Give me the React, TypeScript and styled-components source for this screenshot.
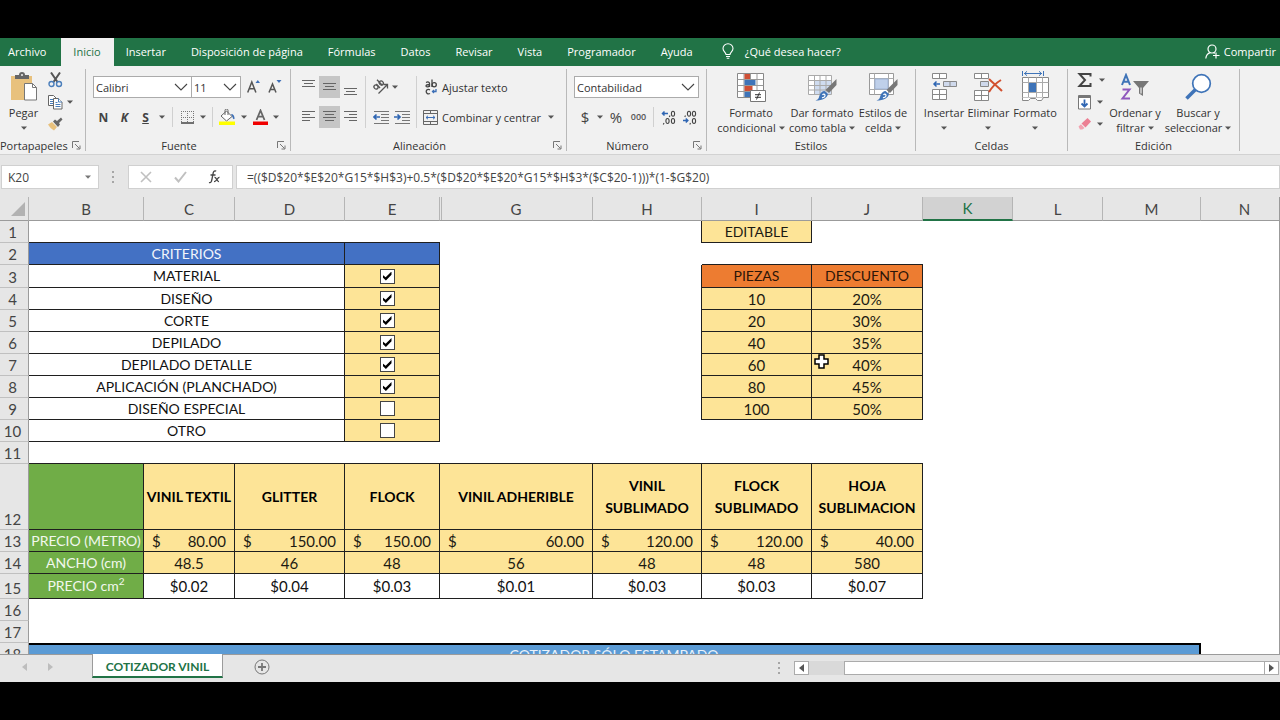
import React from "react";
import styled, { createGlobalStyle, css } from "styled-components";

const ui = `"Open Sans", "Noto Sans", sans-serif`;
const sheetFont = `Lato, "Open Sans", sans-serif`;

const GlobalStyle = createGlobalStyle`
  *, *::before, *::after { box-sizing: border-box; }
  body { margin: 0; background: #000; }
  button, input, select { font: inherit; color: inherit; margin: 0; }
`;

/* ---------- shell ---------- */

const Screen = styled.div`
  display: flex;
  flex-direction: column;
  height: 100vh;
  padding: 38px 0;
  background: #000;
  overflow: hidden;
  font: 11px/15px ${ui};
  color: #333;
`;

const PlainButton = styled.button.attrs({ type: "button" })`
  display: flex;
  align-items: center;
  justify-content: center;
  padding: 0;
  border: 0;
  background: none;
  white-space: nowrap;
`;

/* ---------- menu tabs ---------- */

const MenuBar = styled.nav`
  display: flex;
  flex: none;
  height: 28px;
  background: #217346;
  color: #fff;
`;

const MenuTab = styled(PlainButton)<{ $active?: boolean }>`
  padding: 0 13px 2px 12px;
  background: ${(p) => (p.$active ? "#f1f1f1" : "none")};
  color: ${(p) => (p.$active ? "#217346" : "inherit")};
`;

const FileTab = styled(MenuTab)`
  padding: 0 15px 2px 8px;
`;

const TellMe = styled(MenuTab)`
  gap: 11px;
  padding-left: 16px;
`;

const Share = styled(MenuTab)`
  gap: 4px;
  margin-left: auto;
  padding-left: 0;
  padding-right: 4px;
`;

/* ---------- ribbon ---------- */

const Ribbon = styled.div`
  display: flex;
  flex: none;
  height: 89px;
  padding: 3px 0;
  background: #f1f1f1;
  border-bottom: 1px solid #d2d2d2;
`;

const Group = styled.section<{ $w: number }>`
  display: flex;
  flex-direction: column;
  flex: none;
  width: ${(p) => p.$w}px;
  border-right: 1px solid #b9b9b9;
`;

const GroupBody = styled.div<{ $pad?: number }>`
  display: flex;
  flex: 1;
  padding-left: ${(p) => p.$pad ?? 0}px;
`;

const GroupFoot = styled.div`
  display: flex;
  height: 11px;
  align-items: center;
`;

const GroupName = styled.span`
  flex: 1;
  text-align: center;
`;

const Launcher = styled(PlainButton)`
  width: 18px;
  height: 11px;
`;

const Stack = styled.div<{ $indent?: number }>`
  display: flex;
  flex-direction: column;
  gap: 8px;
  padding: 7px 0 0 ${(p) => p.$indent ?? 0}px;
`;

const Line = styled.div<{ $gap?: number }>`
  display: flex;
  align-items: center;
  height: 22px;
  gap: ${(p) => p.$gap ?? 0}px;
`;

const Tool = styled(PlainButton)<{ $on?: boolean; $w?: number }>`
  width: ${(p) => p.$w ?? 21}px;
  height: 22px;
  background: ${(p) => (p.$on ? "#c6c6c6" : "none")};
`;

const TextTool = styled(PlainButton)`
  height: 22px;
  gap: 4px;
`;

const Letter = styled(Tool)<{ $italic?: boolean; $underline?: boolean }>`
  font-size: 12px;
  font-weight: 700;
  font-style: ${(p) => (p.$italic ? "italic" : "normal")};
  text-decoration: ${(p) => (p.$underline ? "underline" : "none")};
  color: #444;
`;

const Divider = styled.i<{ $tall?: boolean }>`
  flex: none;
  width: 1px;
  height: ${(p) => (p.$tall ? 52 : 20)}px;
  margin: ${(p) => (p.$tall ? "7px 4px 0" : "0 4px")};
  background: #d0d0d0;
`;

const BigTool = styled(PlainButton)<{ $w: number }>`
  flex-direction: column;
  justify-content: flex-start;
  width: ${(p) => p.$w}px;
  padding-top: 2px;
  gap: 3px;
`;

const BigIcon = styled.span`
  display: flex;
  align-items: center;
  justify-content: center;
  height: 31px;
`;

const BigLabel = styled.span`
  display: flex;
  flex-direction: column;
  align-items: center;
`;

const WithCaret = styled.span`
  display: flex;
  align-items: center;
  gap: 3px;
  min-height: 15px;
`;

const SmallColumn = styled.div`
  display: flex;
  flex-direction: column;
`;

const SelectBox = styled.label<{ $w: number }>`
  display: grid;
  flex: none;
  width: ${(p) => p.$w}px;
  height: 22px;
  align-items: center;
  border: 1px solid #ababab;
  background: #fff;

  & + & { margin-left: -1px; }
  > * { grid-area: 1 / 1; }
  > svg { justify-self: end; margin-right: 3px; pointer-events: none; }
  > select {
    appearance: none;
    width: 100%;
    height: 20px;
    padding: 0 2px;
    border: 0;
    background: none;
    color: #333;
  }
`;

/* ---------- formula bar ---------- */

const FormulaBar = styled.div`
  display: flex;
  flex: none;
  align-items: center;
  height: 42px;
  padding: 10px 0 8px 1px;
  background: #e6e6e6;
  font-size: 12px;
`;

const Box = styled.div<{ $w?: number }>`
  display: flex;
  align-items: center;
  flex: ${(p) => (p.$w ? "none" : "1")};
  width: ${(p) => (p.$w ? `${p.$w}px` : "auto")};
  height: 24px;
  border: 1px solid #d0d0d0;
  background: #fff;
`;

const FormulaBox = styled(Box)`
  margin-left: 3px;
  padding-left: 10px;
`;

const Field = styled.input`
  flex: 1;
  min-width: 0;
  height: 20px;
  padding: 0;
  border: 0;
  background: none;
  color: #444;
`;

const NameField = styled(Field)`
  padding-left: 6px;
`;

const BoxButton = styled(PlainButton)`
  flex: 1;
`;

const NameArrow = styled(PlainButton)`
  width: 20px;
`;

const Grip = styled.div<{ $left: number; $right: number }>`
  margin: 0 ${(p) => p.$right}px 0 ${(p) => p.$left}px;
  display: grid;
  gap: 3px;
  > i { width: 2px; height: 2px; background: #a6a6a6; }
`;

/* ---------- sheet ---------- */

const SheetArea = styled.main`
  flex: 1;
  min-height: 0;
  overflow: hidden;
  background: #fff;
  border-right: 1px solid #9b9b9b;
`;

const Grid = styled.table`
  width: 1289px;
  table-layout: fixed;
  border-collapse: separate;
  border-spacing: 0;
  font: 15px/20px ${sheetFont};
  color: #111;
`;

const Col = styled.col<{ $w: number }>`
  width: ${(p) => p.$w}px;
`;

const ColHead = styled.th<{ $active?: boolean; $double?: boolean }>`
  height: 24px;
  padding: 0;
  font-weight: 400;
  color: ${(p) => (p.$active ? "#217346" : "#444")};
  background: ${(p) => (p.$active ? "#d2d2d2" : "#e6e6e6")};
  border-right: 1px solid #b5b5b5;
  border-bottom: ${(p) => (p.$active ? "2px solid #217346" : "1px solid #9b9b9b")};
  ${(p) =>
    p.$double &&
    css`
      background: linear-gradient(#b5b5b5, #b5b5b5) 1px 0 / 1px 100% no-repeat #e6e6e6;
    `}
`;

const Corner = styled(ColHead)`
  > svg { display: block; margin-left: 11px; }
`;

const RowHead = styled.th<{ $h: number }>`
  height: ${(p) => p.$h}px;
  padding: 0 3px 0 0;
  font-weight: 400;
  vertical-align: bottom;
  color: #444;
  background: #e6e6e6;
  border-right: 1px solid #9b9b9b;
  border-bottom: 1px solid #c0c0c0;
`;

const fills = {
  none: ["transparent", "#111"],
  yellow: ["#fde497", "#1c1a12"],
  blue: ["#4371c4", "#f3f6fb"],
  orange: ["#ed7c31", "#2b1508"],
  green: ["#70ad47", "#f2f8ee"],
} as const;

type Fill = keyof typeof fills;

const Cell = styled.td<{ $fill?: Fill; $b?: boolean; $r?: boolean }>`
  padding: 0;
  text-align: center;
  white-space: nowrap;
  background: ${(p) => fills[p.$fill ?? "none"][0]};
  color: ${(p) => fills[p.$fill ?? "none"][1]};
  border: 0 solid #1f1f1f;
  border-bottom-width: ${(p) => (p.$b ? 1 : 0)}px;
  border-right-width: ${(p) => (p.$r ? 1 : 0)}px;
`;

const LabelCell = styled(Cell)`
  font-size: 14px;
  > sup { font-size: 10px; line-height: 10px; }
`;

const MaterialCell = styled(LabelCell)`
  font-weight: 700;
  line-height: 22px;
  color: #000;
`;

const BannerCell = styled.td`
  padding: 0;
  font-size: 14px;
  text-align: center;
  color: #eaf2fa;
  background: #5b9bd5;
  border-top: 2px solid #000;
  border-right: 2px solid #000;
`;

const Money = styled.span`
  display: flex;
  justify-content: space-between;
  padding: 0 8px;
`;

const Check = styled.input.attrs({ type: "checkbox" })`
  appearance: none;
  display: block;
  width: 15px;
  height: 15px;
  margin: 0 auto;
  border: 1px solid #444;
  background: #fff;

  &:checked::after {
    content: "";
    display: block;
    width: 9px;
    height: 9px;
    margin: 2px;
    background: #000;
    clip-path: polygon(0 35%, 35% 65%, 100% 0, 100% 35%, 38% 100%, 0 65%);
  }
`;

const CheckCell = styled(Cell)`
  padding-right: 10px;
`;

const PointerCell = styled(Cell)`
  position: relative;
  > svg { position: absolute; left: 2px; top: 0; }
`;

/* ---------- bottom bar ---------- */

const BottomBar = styled.footer`
  display: flex;
  flex: none;
  align-items: flex-start;
  height: 28px;
  background: #e6e6e6;
  border-top: 1px solid #9b9b9b;
`;

const TabArrows = styled.div`
  display: flex;
  align-items: center;
  width: 92px;
  height: 24px;
  gap: 21px;
  padding-left: 22px;
`;

const SheetTab = styled(PlainButton)`
  height: 24px;
  width: 131px;
  margin-top: -1px;
  padding-top: 3px;
  background: #fff;
  border: solid #9b9b9b;
  border-width: 0 1px;
  border-bottom: 2px solid #217346;
  font: 700 12px/20px ${sheetFont};
  color: #217346;
`;

const AddSheet = styled(PlainButton)`
  height: 24px;
  margin-left: 31px;
`;

const ScrollArea = styled.div`
  display: flex;
  align-items: center;
  width: 502px;
  height: 26px;
  margin-left: auto;
  padding-right: 1px;
`;

const ScrollTrack = styled.div`
  display: flex;
  flex: 1;
  height: 14px;
  background: #d9d9d9;
`;

const ScrollButton = styled(PlainButton)`
  width: 15px;
  height: 14px;
  background: #fff;
  border: 1px solid #ababab;
`;

const ScrollThumb = styled.div`
  flex: 1;
  margin: 0 -1px 0 35px;
  background: #fff;
  border: 1px solid #ababab;
`;

/* ---------- drawings ---------- */

const Caret = ({ color = "#555" }: { color?: string }) => (
  <svg width="6" height="4" viewBox="0 0 6 4" aria-hidden="true">
    <path d="M0 0.5h6L3 3.8z" fill={color} />
  </svg>
);

const Chevron = () => (
  <svg width="14" height="8" viewBox="0 0 14 8" fill="none" stroke="#444" strokeWidth="1.1" aria-hidden="true">
    <path d="M1 1l6 6 6-6" />
  </svg>
);

const Lines = ({ rows, y = 4, step = 3 }: { rows: [number, number][]; y?: number; step?: number }) => (
  <svg width="15" height="20" viewBox="0 0 15 20" stroke="#666" aria-hidden="true">
    {rows.map(([a, b], i) => (
      <path key={i} d={`M${a} ${y + i * step + 0.5}H${b}`} />
    ))}
  </svg>
);

const LauncherIcon = () => (
  <svg width="9" height="9" viewBox="0 0 9 9" fill="none" stroke="#777" aria-hidden="true">
    <path d="M.5 7V.5H7M3 3l4.500 4.500M8 4.500V8H4.500" />
  </svg>
);

const Bulb = () => (
  <svg width="12" height="16" viewBox="0 0 12 16" fill="none" stroke="#fff" strokeWidth="1.1" aria-hidden="true">
    <path d="M4 11.500C4 9.500 1 8.500 1 5.500a5 4.800 0 0 1 10 0c0 3-3 4-3 6zM4 13.500h4M4.700 15.300h2.600" />
  </svg>
);

const ShareIcon = () => (
  <svg width="15" height="15" viewBox="0 0 15 15" fill="none" stroke="#fff" strokeWidth="1.2" aria-hidden="true">
    <circle cx="7" cy="5" r="4" />
    <path d="M.8 14.500C1.200 11 3 9.300 5.300 8.700M8.500 8.600l1.500.7M11 8.500v6M8 11.500h6.500" />
  </svg>
);

const PasteIcon = () => (
  <svg width="28" height="29" viewBox="0 0 28 29" aria-hidden="true">
    <path d="M1 4h21v24H1z" fill="#e8c17d" />
    <path d="M5 3h4a3 3 0 0 1 6 0h4v4H5z" fill="#666" />
    <circle cx="12" cy="3" r="1" fill="#f1f1f1" />
    <path d="M14.500 11.500h8l4 4v12.500h-12z" fill="#fff" stroke="#777" />
    <path d="M22.500 11.500v4h4" fill="none" stroke="#777" />
  </svg>
);

const CutIcon = () => (
  <svg width="15" height="16" viewBox="0 0 15 16" fill="none" aria-hidden="true">
    <path d="M3 .5l6.500 9.500M12 .5L5.500 10" stroke="#555" strokeWidth="2" />
    <circle cx="3.500" cy="12" r="2.500" stroke="#4a7ebb" strokeWidth="1.400" />
    <circle cx="11" cy="12" r="2.500" stroke="#4a7ebb" strokeWidth="1.400" />
  </svg>
);

const CopyIcon = () => (
  <svg width="15" height="15" viewBox="0 0 15 15" fill="#fff" stroke="#666" aria-hidden="true">
    <path d="M.5.500h5l2.500 2.500v7.500H.5z" />
    <path d="M2 4.500h3M2 6.500h3M2 8.500h3" stroke="#4a7ebb" />
    <path d="M5.500 3.500h5l3.500 3.500v7H5.500z" />
    <path d="M10.500 3.500V7H14M7.500 7.500h2M7.500 9.500h5M7.500 11.500h5" stroke="#4a7ebb" />
  </svg>
);

const BrushIcon = () => (
  <svg width="15" height="14" viewBox="0 0 15 14" aria-hidden="true">
    <path d="M0 7.500l4-2.500 5 5-3 3.500C3.500 12 1.500 10 0 7.500z" fill="#e8c17d" />
    <path d="M5 4.500L7 2.500l2 1.500L13 .5l1.500 2-3.500 3.500 1 1.500-2 2.500z" fill="#666" />
  </svg>
);

const GrowIcon = ({ down }: { down?: boolean }) => (
  <svg width="14" height="14" viewBox="0 0 14 14" fill="none" aria-hidden="true">
    <path
      d={down ? "M1 12.500L4.500 4l3.500 8.500M2.200 9.500h4.600" : "M.7 12.500L4.800 2l4.100 10.500M2.200 8.800h5.200"}
      stroke="#555"
      strokeWidth="1.500"
    />
    <path d={down ? "M8.500 0h5L11 3z" : "M8.500 3h4.500L10.800 0z"} fill="#3d6fb6" />
  </svg>
);

const BordersIcon = () => (
  <svg width="14" height="13" viewBox="0 0 14 13" fill="none" stroke="#777" aria-hidden="true">
    <path d="M0 .5h13M0 6.500h13M.5 0v12M6.500 0v12M12.500 0v12" strokeDasharray="1 1" />
    <path d="M0 12h13" stroke="#444" strokeWidth="1.500" />
  </svg>
);

const FillIcon = () => (
  <svg width="17" height="16" viewBox="0 0 17 16" fill="none" aria-hidden="true">
    <path d="M7.500 2L13 7.500 7.500 12 2 7z" fill="#fff" stroke="#666" />
    <path d="M6 6V1.500a1.500 1.500 0 0 1 3 0V6" stroke="#666" />
    <path d="M12 5c2.500 0 3.800 2 3.500 5-1 .5-1.800-.5-2-2z" fill="#3d6fb6" />
    <path d="M0 12.500h16v3.500H0z" fill="#ff0" />
  </svg>
);

const FontColorIcon = () => (
  <svg width="15" height="16" viewBox="0 0 15 16" fill="none" aria-hidden="true">
    <path d="M3.500 11L7.500 1.500 11.500 11M5 7.700h5" stroke="#666" strokeWidth="1.800" />
    <path d="M0 12.500h15v3.500H0z" fill="#f00000" />
  </svg>
);

const OrientIcon = () => (
  <svg width="17" height="16" viewBox="0 0 17 16" fill="none" stroke="#555" strokeWidth="1.300" aria-hidden="true">
    <ellipse cx="4" cy="8" rx="2.200" ry="1.900" transform="rotate(45 4 8)" />
    <path d="M4.300 5l3.700 4M5 .8l5.200 5.400" />
    <ellipse cx="9.300" cy="4" rx="2.200" ry="1.900" transform="rotate(45 9.300 4)" />
    <path d="M6.500 14.500l8.500-8.500M11.500 5.500h4v4" />
  </svg>
);

const IndentIcon = ({ right }: { right?: boolean }) => (
  <svg width="16" height="14" viewBox="0 0 16 14" fill="none" stroke="#777" aria-hidden="true">
    <path d="M1 1.500h15M8 4.500h8M8 7.500h8M8 10.500h8M1 13.500h15" />
    <path
      d={right ? "M0 7h6M3.500 4.500L6 7 3.500 9.500" : "M7 7H1M3.500 4.500L1 7l2.500 2.500"}
      stroke="#2f66b3"
      strokeWidth="1.700"
    />
  </svg>
);

const WrapIcon = () => (
  <svg width="15" height="16" viewBox="-2 0 15 16" fill="none" stroke="#444" strokeWidth="1.300" aria-hidden="true">
    <path d="M1 3.500c2-1 3.500-.5 3.500 1V8M4.500 5.500C2 5.500 1 6 1 7s2 1.500 3.500 0M7 .5V8" />
    <circle cx="9.200" cy="5.700" r="2.100" />
    <path d="M5 10.800c-2-1-3.800 0-3.800 1.800s1.800 2.900 3.800 1.900" />
    <path d="M11 10v2.500H7.500M9 11l-1.500 1.500L9 14" stroke="#3d6fb6" />
  </svg>
);

const MergeIcon = () => (
  <svg width="15" height="15" viewBox="0 0 15 15" fill="none" stroke="#666" aria-hidden="true">
    <path d="M.5.500h14v14H.5zM.5 3.500h14M.5 11.500h14M7.500.500v3M7.500 11.500v3" />
    <path d="M3 7.500h9M5 5.800L3 7.500l2 1.700M10 5.800l2 1.700-2 1.700" stroke="#3d6fb6" />
  </svg>
);

const SmallZeros = styled.span`
  font-size: 9px;
  line-height: 12px;
  font-weight: 600;
  color: #555;
`;

const Sign = styled.span`
  font-size: 15px;
  line-height: 20px;
  color: #444;
`;

const DecimalIcon = ({ less }: { less?: boolean }) => (
  <svg width="16" height="15" viewBox="0 0 16 15" fill="none" stroke="#444" strokeWidth="1.100" aria-hidden="true">
    {less ? (
      <>
        <path d="M3.500 5.500L2.800 7" />
        <ellipse cx="7" cy="3.800" rx="1.600" ry="2.500" />
        <ellipse cx="12" cy="3.800" rx="1.600" ry="2.500" />
        <ellipse cx="12" cy="11" rx="1.600" ry="2.500" />
        <path d="M8.500 13l-.7 1.500" />
        <path d="M1 10.500h5M3.800 8.500l2 2-2 2" stroke="#2f66b3" strokeWidth="1.500" />
      </>
    ) : (
      <>
        <ellipse cx="12" cy="3.800" rx="1.600" ry="2.500" />
        <path d="M9 5.500L8.300 7M3 13l-.7 1.500" />
        <ellipse cx="6.500" cy="11" rx="1.600" ry="2.500" />
        <ellipse cx="12" cy="11" rx="1.600" ry="2.500" />
        <path d="M7 3.500H1.500M3.500 1.500l-2 2 2 2" stroke="#2f66b3" strokeWidth="1.500" />
      </>
    )}
  </svg>
);

const ConditionalIcon = () => (
  <svg width="30" height="30" viewBox="0 0 30 30" fill="none" aria-hidden="true">
    <path d="M1.500 1.500h26v24h-26z" fill="#fff" stroke="#888" />
    <path d="M1.500 7.500h26M1.500 13.500h26M1.500 19.500h26M8 1.500v24M14.500 1.500v24M21 1.500v24" stroke="#999" />
    <path d="M8.500 2h5.500v5H8.500zM8.500 14h8v5h-8z" fill="#cf4f35" />
    <path d="M8.500 8h11v5h-11zM8.500 20h5.500v5H8.500z" fill="#3f74b8" />
    <path d="M14.500 18.500h15v11h-15z" fill="#fff" stroke="#777" />
    <path d="M19 22.700h6M19 25.300h6M23.500 20.500l-3 7" stroke="#333" />
  </svg>
);

const Brush = () => (
  <>
    <path d="M29.500 7v6l-7.500 8-3.500-3z" fill="#777" />
    <path d="M17.500 19l3.500 3c-1 4-5 6.500-12.500 6.500 3-1 3-2 4-5 1-3 3-4.500 5-4.500z" fill="#3f74b8" />
    <path d="M15.500 23c1-1.500 2.500-1 2.500.5s-2 2.500-3 2" stroke="#fff" strokeWidth="1.200" fill="none" />
  </>
);

const TableFormatIcon = () => (
  <svg width="30" height="30" viewBox="0 0 30 30" fill="none" aria-hidden="true">
    <path d="M1.500 3.500h23v19h-23z" fill="#fff" />
    <path d="M7.500 8.500h17v14h-17z" fill="#cfdcf0" />
    <path d="M1.500 3.500h23v19h-23zM1.500 8.500h23M1.500 13.500h23M1.500 18h23M7.500 3.500v19M13 3.500v19M19 3.500v19" stroke="#aaa" />
    <Brush />
  </svg>
);

const CellStyleIcon = () => (
  <svg width="30" height="30" viewBox="0 0 30 30" fill="none" aria-hidden="true">
    <path d="M1.500 1.500h24v21h-24z" fill="#fff" stroke="#999" />
    <path d="M1.500 6.500h24M1.500 17.500h24M6.500 1.500v21M20.500 1.500v21" stroke="#aaa" />
    <path d="M7 7h13v10H7z" fill="#bfd0ea" stroke="#9fb4d6" />
    <Brush />
  </svg>
);

const InsertIcon = () => (
  <svg width="26" height="28" viewBox="0 0 26 28" fill="#fff" stroke="#888" aria-hidden="true">
    <path d="M1.500.500h14v5h-14zM8.500.500v5M1.500 16.500h14v10h-14zM1.500 21.500h14M8.500 16.500v10" />
    <path d="M12.500 8.500h13v5h-13zM19 8.500v5" fill="#cfd9ec" />
    <path d="M9 11H3M5.500 8.500L3 11l2.500 2.500" fill="none" stroke="#2f66b3" strokeWidth="1.500" />
  </svg>
);

const DeleteIcon = () => (
  <svg width="29" height="28" viewBox="0 0 29 28" fill="#fff" stroke="#888" aria-hidden="true">
    <path d="M.5.500h14v5H.5zM7.500.500v5M.5 17.500h14v10H.5zM.5 22.500h14M7.500 17.500v10" />
    <path d="M6.500 8.500h8v5h-8z" fill="#cfd9ec" />
    <path d="M15 6c4 4 9 8 13 12M27 7c-5 3-9 7-12 12" fill="none" stroke="#d2502f" strokeWidth="2" />
  </svg>
);

const FormatIcon = () => (
  <svg width="29" height="31" viewBox="0 0 29 31" fill="none" aria-hidden="true">
    <path d="M1.500 0v5M22.500 0v5M3 2.500h18M6 .3L3.500 2.500 6 4.700M18 .3l2.500 2.200L18 4.700" stroke="#3f74b8" />
    <path d="M1.500 6.500h26v20h-26z" fill="#fff" stroke="#888" />
    <path d="M1.500 11.500h26M1.500 21.500h26M7.500 6.500v20M15.500 6.500v20M21.500 6.500v20" stroke="#aaa" />
    <path d="M8 12h7v9H8z" fill="#3f74b8" />
    <path d="M1.500 26.500v3h6l2-2h5l2 2h4l2-3" fill="#fff" stroke="#888" />
  </svg>
);

const SigmaIcon = () => (
  <svg width="16" height="16" viewBox="0 0 16 16" fill="none" stroke="#444" strokeWidth="2" aria-hidden="true">
    <path d="M13.500 4.500V2H2.500L8 8l-5.500 6h11v-3" />
  </svg>
);

const FillDownIcon = () => (
  <svg width="15" height="15" viewBox="0 0 15 15" fill="none" aria-hidden="true">
    <path d="M1.500.500h12v13.500h-12z" fill="#fff" stroke="#777" />
    <path d="M1.500 2h12" stroke="#777" strokeWidth="2" />
    <path d="M7.500 4.500v7M4.500 8.500l3 3 3-3" stroke="#2f66b3" strokeWidth="1.800" />
  </svg>
);

const EraserIcon = () => (
  <svg width="15" height="14" viewBox="0 0 15 14" aria-hidden="true">
    <path d="M4.500 6.500L10.500 1l3.500 3.500L8.500 10.500z" fill="#ec7f93" />
    <path d="M1.500 9.500L4 7.200l3.500 3.800-2.200 1.500H3z" fill="#f2a3b1" />
  </svg>
);

const SortIcon = () => (
  <svg width="30" height="28" viewBox="0 0 30 28" fill="none" aria-hidden="true">
    <path d="M2 12L6 2l4 10M3.500 8.800h5" stroke="#3f74b8" strokeWidth="2" />
    <path d="M2.500 16.500h7l-7 9h7.500" stroke="#8f58bd" strokeWidth="2" />
    <path d="M13 8h16l-6 7v8l-4-2.500V15z" fill="#777" />
    <path d="M21 14.500v6" stroke="#f1f1f1" strokeWidth="1.200" />
  </svg>
);

const SearchIcon = () => (
  <svg width="28" height="28" viewBox="0 0 28 28" fill="none" stroke="#3f74b8" aria-hidden="true">
    <path d="M2.500 25.500l9-9" strokeWidth="3.500" />
    <circle cx="17.500" cy="10.500" r="8.800" fill="#fff" strokeWidth="1.700" />
  </svg>
);

const Triangle = ({ left, color }: { left?: boolean; color: string }) => (
  <svg width="5" height="8" viewBox="0 0 5 8" aria-hidden="true">
    <path d={left ? "M5 0v8L0 4z" : "M0 0v8l5-4z"} fill={color} />
  </svg>
);

const CrossPointer = () => (
  <svg width="15" height="15" viewBox="0 0 15 15" aria-hidden="true">
    <path d="M5 1h5v4h4v5h-4v4H5v-4H1V5h4z" fill="#fff" stroke="#000" strokeWidth="1.500" />
  </svg>
);

/* ---------- data ---------- */

const menuTabs = ["Insertar", "Disposición de página", "Fórmulas", "Datos", "Revisar", "Vista", "Programador", "Ayuda"];

const columns: [string, number][] = [
  ["B", 115], ["C", 91], ["D", 110], ["E", 95], ["G", 153], ["H", 109],
  ["I", 110], ["J", 111], ["K", 90], ["L", 90], ["M", 98], ["N", 88],
];

const criteria: [string, boolean][] = [
  ["MATERIAL", true],
  ["DISEÑO", true],
  ["CORTE", true],
  ["DEPILADO", true],
  ["DEPILADO DETALLE", true],
  ["APLICACIÓN (PLANCHADO)", true],
  ["DISEÑO ESPECIAL", false],
  ["OTRO", false],
];

const discounts = [
  ["PIEZAS", "DESCUENTO"],
  ["10", "20%"],
  ["20", "30%"],
  ["40", "35%"],
  ["60", "40%"],
  ["80", "45%"],
  ["100", "50%"],
];

const pointerRow = 4;

const materials = [
  { name: ["VINIL TEXTIL"], price: "80.00", width: "48.5", area: "$0.02" },
  { name: ["GLITTER"], price: "150.00", width: "46", area: "$0.04" },
  { name: ["FLOCK"], price: "150.00", width: "48", area: "$0.03" },
  { name: ["VINIL ADHERIBLE"], price: "60.00", width: "56", area: "$0.01" },
  { name: ["VINIL", "SUBLIMADO"], price: "120.00", width: "48", area: "$0.03" },
  { name: ["FLOCK", "SUBLIMADO"], price: "120.00", width: "48", area: "$0.03" },
  { name: ["HOJA", "SUBLIMACION"], price: "40.00", width: "580", area: "$0.07" },
];

/* ---------- pieces ---------- */

const Foot = ({ name, launcher }: { name: string; launcher?: boolean }) => (
  <GroupFoot>
    <GroupName>{name}</GroupName>
    {launcher && (
      <Launcher aria-label={`Opciones de ${name}`}>
        <LauncherIcon />
      </Launcher>
    )}
  </GroupFoot>
);

const Big = ({ w, icon, top, bottom }: { w: number; icon: React.ReactNode; top: string; bottom?: string }) => (
  <BigTool $w={w}>
    <BigIcon>{icon}</BigIcon>
    <BigLabel>
      <span>{top}</span>
      <WithCaret>
        {bottom}
        <Caret />
      </WithCaret>
    </BigLabel>
  </BigTool>
);

const Dots = ({ left, right }: { left: number; right: number }) => (
  <Grip $left={left} $right={right}>
    <i />
    <i />
    <i />
  </Grip>
);

const full: [number, number] = [1, 14];

export default function App() {
  return (
    <Screen>
      <GlobalStyle />
      <MenuBar>
        <FileTab>Archivo</FileTab>
        <MenuTab $active>Inicio</MenuTab>
        {menuTabs.map((t) => (
          <MenuTab key={t}>{t}</MenuTab>
        ))}
        <TellMe>
          <Bulb />
          ¿Qué desea hacer?
        </TellMe>
        <Share>
          <ShareIcon />
          Compartir
        </Share>
      </MenuBar>

      <Ribbon>
        <Group $w={86}>
          <GroupBody>
            <Big w={47} icon={<PasteIcon />} top="Pegar" />
            <SmallColumn>
              <Line><Tool $w={16} aria-label="Cortar"><CutIcon /></Tool></Line>
              <Line $gap={4}><Tool $w={16} aria-label="Copiar"><CopyIcon /></Tool><Caret /></Line>
              <Line><Tool $w={16} aria-label="Copiar formato"><BrushIcon /></Tool></Line>
            </SmallColumn>
          </GroupBody>
          <Foot name="Portapapeles" launcher />
        </Group>

        <Group $w={205}>
          <GroupBody $pad={7}>
            <Stack>
              <Line>
                <SelectBox $w={99}>
                  <select aria-label="Fuente"><option>Calibri</option></select>
                  <Chevron />
                </SelectBox>
                <SelectBox $w={50}>
                  <select aria-label="Tamaño de fuente"><option>11</option></select>
                  <Chevron />
                </SelectBox>
                <Tool $w={25} aria-label="Aumentar tamaño"><GrowIcon /></Tool>
                <Tool $w={18} aria-label="Reducir tamaño"><GrowIcon down /></Tool>
              </Line>
              <Line>
                <Letter>N</Letter>
                <Letter $italic>K</Letter>
                <Letter $underline>S</Letter>
                <Tool $w={12} aria-label="Tipo de subrayado"><Caret /></Tool>
                <Divider />
                <Tool aria-label="Bordes"><BordersIcon /></Tool>
                <Tool $w={10} aria-label="Tipo de borde"><Caret /></Tool>
                <Divider />
                <Tool aria-label="Color de relleno"><FillIcon /></Tool>
                <Tool $w={12} aria-label="Elegir relleno"><Caret /></Tool>
                <Tool aria-label="Color de fuente"><FontColorIcon /></Tool>
                <Tool $w={10} aria-label="Elegir color"><Caret /></Tool>
              </Line>
            </Stack>
          </GroupBody>
          <Foot name="Fuente" launcher />
        </Group>

        <Group $w={276}>
          <GroupBody $pad={7}>
            <Stack>
              <Line>
                <Tool aria-label="Alinear arriba"><Lines rows={[full, [3, 12], full]} y={3} /></Tool>
                <Tool $on aria-label="Alinear en medio"><Lines rows={[full, [3, 12], full]} y={6} /></Tool>
                <Tool aria-label="Alinear abajo"><Lines rows={[full, [3, 12], full]} y={11} /></Tool>
              </Line>
              <Line>
                <Tool aria-label="Alinear a la izquierda"><Lines rows={[full, [1, 9], full, [1, 9]]} /></Tool>
                <Tool $on aria-label="Centrar"><Lines rows={[full, [3, 12], full, [3, 12]]} /></Tool>
                <Tool aria-label="Alinear a la derecha"><Lines rows={[full, [6, 14], full, [6, 14]]} /></Tool>
              </Line>
            </Stack>
            <Divider $tall />
            <Stack>
              <Line>
                <Tool aria-label="Orientación"><OrientIcon /></Tool>
                <Tool $w={8} aria-label="Tipo de orientación"><Caret /></Tool>
              </Line>
              <Line>
                <Tool aria-label="Disminuir sangría"><IndentIcon /></Tool>
                <Tool aria-label="Aumentar sangría"><IndentIcon right /></Tool>
              </Line>
            </Stack>
            <Divider $tall />
            <Stack $indent={2}>
              <Line>
                <TextTool><WrapIcon />Ajustar texto</TextTool>
              </Line>
              <Line $gap={7}>
                <TextTool><MergeIcon />Combinar y centrar</TextTool>
                <Caret />
              </Line>
            </Stack>
          </GroupBody>
          <Foot name="Alineación" launcher />
        </Group>

        <Group $w={140}>
          <GroupBody $pad={7}>
            <Stack>
              <Line>
                <SelectBox $w={125}>
                  <select aria-label="Formato de número"><option>Contabilidad</option></select>
                  <Chevron />
                </SelectBox>
              </Line>
              <Line>
                <Tool $w={22}><Sign>$</Sign></Tool>
                <Tool $w={8} aria-label="Moneda"><Caret /></Tool>
                <Tool $w={24}><Sign>%</Sign></Tool>
                <Tool><SmallZeros>000</SmallZeros></Tool>
                <Divider />
                <Tool aria-label="Aumentar decimales"><DecimalIcon /></Tool>
                <Tool aria-label="Disminuir decimales"><DecimalIcon less /></Tool>
              </Line>
            </Stack>
          </GroupBody>
          <Foot name="Número" launcher />
        </Group>

        <Group $w={209}>
          <GroupBody $pad={7}>
            <Big w={74} icon={<ConditionalIcon />} top="Formato" bottom="condicional" />
            <Big w={68} icon={<TableFormatIcon />} top="Dar formato" bottom="como tabla" />
            <Big w={54} icon={<CellStyleIcon />} top="Estilos de" bottom="celda" />
          </GroupBody>
          <Foot name="Estilos" />
        </Group>

        <Group $w={152}>
          <GroupBody $pad={6}>
            <Big w={44} icon={<InsertIcon />} top="Insertar" />
            <Big w={45} icon={<DeleteIcon />} top="Eliminar" />
            <Big w={48} icon={<FormatIcon />} top="Formato" />
          </GroupBody>
          <Foot name="Celdas" />
        </Group>

        <Group $w={172}>
          <GroupBody $pad={7}>
            <SmallColumn>
              <Line $gap={5}><Tool $w={19} aria-label="Autosuma"><SigmaIcon /></Tool><Caret /></Line>
              <Line $gap={3}><Tool $w={19} aria-label="Rellenar"><FillDownIcon /></Tool><Caret /></Line>
              <Line $gap={3}><Tool $w={19} aria-label="Borrar"><EraserIcon /></Tool><Caret /></Line>
            </SmallColumn>
            <Big w={60} icon={<SortIcon />} top="Ordenar y" bottom="filtrar" />
            <Big w={66} icon={<SearchIcon />} top="Buscar y" bottom="seleccionar" />
          </GroupBody>
          <Foot name="Edición" />
        </Group>
      </Ribbon>

      <FormulaBar>
        <Box $w={98}>
          <NameField aria-label="Cuadro de nombres" defaultValue="K20" />
          <NameArrow aria-label="Nombres definidos"><Caret color="#777" /></NameArrow>
        </Box>
        <Dots left={13} right={14} />
        <Box $w={105}>
          <BoxButton aria-label="Cancelar">
            <svg width="12" height="12" viewBox="0 0 12 12" stroke="#c0c0c0" strokeWidth="1.600"><path d="M1 1l10 10M11 1L1 11" /></svg>
          </BoxButton>
          <BoxButton aria-label="Introducir">
            <svg width="13" height="12" viewBox="0 0 13 12" fill="none" stroke="#c0c0c0" strokeWidth="2"><path d="M1 6.500l3.500 4L12 1" /></svg>
          </BoxButton>
          <BoxButton aria-label="Insertar función">
            <svg width="14" height="14" viewBox="0 0 14 14" fill="none" stroke="#444" strokeWidth="1.300">
              <path d="M1 12.500c2 .8 2.500-1 3-3.500L5.200 3C5.500 1 6.800.6 8.200 1.200M2.500 5h5M6.500 7.500c2-.5 2.500 4.500 4.500 4M11.500 7.500c-2-.5-3 4.500-5.500 4" />
            </svg>
          </BoxButton>
        </Box>
        <FormulaBox>
          <Field
            aria-label="Barra de fórmulas"
            defaultValue="=(($D$20*$E$20*G15*$H$3)+0.5*($D$20*$E$20*G15*$H$3*($C$20-1)))*(1-$G$20)"
          />
        </FormulaBox>
      </FormulaBar>

      <SheetArea>
        <Grid>
          <colgroup>
            <Col $w={29} />
            {columns.map(([c, w]) => (
              <Col key={c} $w={w} />
            ))}
          </colgroup>
          <thead>
            <tr>
              <Corner aria-label="Seleccionar todo">
                <svg width="14" height="14" viewBox="0 0 14 14" aria-hidden="true"><path d="M14 0v14H0z" fill="#b2b2b2" /></svg>
              </Corner>
              {columns.map(([c]) => (
                <ColHead key={c} scope="col" $active={c === "K"} $double={c === "G"}>{c}</ColHead>
              ))}
            </tr>
          </thead>
          <tbody>
            <tr>
              <RowHead $h={22} scope="row">1</RowHead>
              <Cell colSpan={4} $b />
              <Cell />
              <Cell $r />
              <LabelCell $fill="yellow" $b $r>EDITABLE</LabelCell>
              <Cell colSpan={5} />
            </tr>
            <tr>
              <RowHead $h={22} scope="row">2</RowHead>
              <LabelCell colSpan={3} $fill="blue" $b $r>CRITERIOS</LabelCell>
              <Cell $fill="blue" $b $r />
              <Cell colSpan={2} />
              <Cell colSpan={2} $b />
              <Cell colSpan={4} />
            </tr>
            {criteria.map(([name, checked], i) => {
              const pair = discounts[i];
              const fill: Fill = i === 0 ? "orange" : "yellow";
              const PairCell = i === 0 ? LabelCell : Cell;
              const PercentCell = i === pointerRow ? PointerCell : PairCell;
              return (
                <tr key={name}>
                  <RowHead $h={i === 0 ? 23 : 22} scope="row">{i + 3}</RowHead>
                  <LabelCell colSpan={3} $b $r>{name}</LabelCell>
                  <CheckCell $fill="yellow" $b $r><Check aria-label={name} defaultChecked={checked} /></CheckCell>
                  <Cell />
                  {pair ? (
                    <>
                      <Cell $r />
                      <PairCell $fill={fill} $b $r>{pair[0]}</PairCell>
                      <PercentCell $fill={fill} $b $r>
                        {pair[1]}
                        {i === pointerRow && <CrossPointer />}
                      </PercentCell>
                    </>
                  ) : (
                    <Cell colSpan={3} />
                  )}
                  <Cell colSpan={4} />
                </tr>
              );
            })}
            <tr>
              <RowHead $h={22} scope="row">11</RowHead>
              <Cell colSpan={8} $b />
              <Cell colSpan={4} />
            </tr>
            <tr>
              <RowHead $h={66} scope="row">12</RowHead>
              <Cell $fill="green" $b $r />
              {materials.map((m, i) => (
                <MaterialCell key={i} $fill="yellow" $b $r>
                  {m.name[0]}
                  {m.name[1] && <><br />{m.name[1]}</>}
                </MaterialCell>
              ))}
              <Cell colSpan={4} />
            </tr>
            <tr>
              <RowHead $h={22} scope="row">13</RowHead>
              <LabelCell $fill="green" $b $r>PRECIO (METRO)</LabelCell>
              {materials.map((m, i) => (
                <Cell key={i} $fill="yellow" $b $r><Money><span>$</span><span>{m.price}</span></Money></Cell>
              ))}
              <Cell colSpan={4} />
            </tr>
            <tr>
              <RowHead $h={22} scope="row">14</RowHead>
              <LabelCell $fill="green" $b $r>ANCHO (cm)</LabelCell>
              {materials.map((m, i) => (
                <Cell key={i} $fill="yellow" $b $r>{m.width}</Cell>
              ))}
              <Cell colSpan={4} />
            </tr>
            <tr>
              <RowHead $h={25} scope="row">15</RowHead>
              <LabelCell $fill="green" $b $r>PRECIO cm<sup>2</sup></LabelCell>
              {materials.map((m, i) => (
                <Cell key={i} $b $r>{m.area}</Cell>
              ))}
              <Cell colSpan={4} />
            </tr>
            <tr>
              <RowHead $h={22} scope="row">16</RowHead>
              <Cell colSpan={12} />
            </tr>
            <tr>
              <RowHead $h={22} scope="row">17</RowHead>
              <Cell colSpan={12} />
            </tr>
            <tr>
              <RowHead $h={22} scope="row">18</RowHead>
              <BannerCell colSpan={11}>COTIZADOR SÓLO ESTAMPADO</BannerCell>
              <Cell />
            </tr>
          </tbody>
        </Grid>
      </SheetArea>

      <BottomBar>
        <TabArrows>
          <Triangle left color="#bdbdbd" />
          <Triangle color="#bdbdbd" />
        </TabArrows>
        <SheetTab>COTIZADOR VINIL</SheetTab>
        <AddSheet aria-label="Hoja nueva">
          <svg width="16" height="16" viewBox="0 0 16 16" fill="none" stroke="#777">
            <circle cx="8" cy="8" r="7" />
            <path d="M8 4v8M4 8h8" strokeWidth="1.800" />
          </svg>
        </AddSheet>
        <ScrollArea>
          <Dots left={0} right={14} />
          <ScrollTrack>
            <ScrollButton aria-label="Desplazar a la izquierda"><Triangle left color="#555" /></ScrollButton>
            <ScrollThumb />
            <ScrollButton aria-label="Desplazar a la derecha"><Triangle color="#555" /></ScrollButton>
          </ScrollTrack>
        </ScrollArea>
      </BottomBar>
    </Screen>
  );
}
